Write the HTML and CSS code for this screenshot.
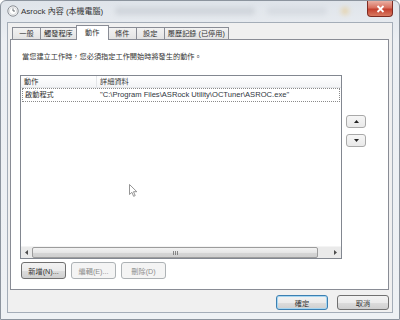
FILE: index.html
```html
<!DOCTYPE html>
<html lang="zh-Hant">
    <head>
        <meta charset="UTF-8" />
        <title>Asrock 內容 (本機電腦)</title>
        <link rel="stylesheet" href="styles.css">
    </head>
    <body>

        <div class="window">
            <div class="titlebar">
                <svg class="app-icon" width="12" height="12" viewBox="0 0 12 12">
                    <circle cx="6" cy="6" r="5.2" fill="#f4f4f4" stroke="#8a8f96" stroke-width="1"/>
                    <circle cx="6" cy="6" r="3.6" fill="#ffffff" stroke="#c4c8cc" stroke-width="0.6"/>
                    <path d="M6 3.4 V6 H8" fill="none" stroke="#5a6068" stroke-width="0.9"/>
                </svg>
                <span class="title">Asrock 內容 (本機電腦)</span>
                <span class="haze haze-wide"></span>
                <span class="haze haze-short"></span>
                <span class="haze haze-dot"></span>
                <button class="close-btn">
                    <svg width="9" height="8" viewBox="0 0 9 8">
                        <path d="M1.5 1 L7.5 7 M7.5 1 L1.5 7" stroke="#ffffff" stroke-width="1.8"/>
                    </svg>
                </button>
            </div>

            <div class="client">
                <div class="tabs">
                    <div class="tab">一般</div>
                    <div class="tab">觸發程序</div>
                    <div class="tab active">動作</div>
                    <div class="tab">條件</div>
                    <div class="tab">設定</div>
                    <div class="tab">履歷記錄 (已停用)</div>
                </div>

                <div class="panel">
                    <p class="desc">當您建立工作時，您必須指定工作開始時將發生的動作。</p>

                    <div class="list-row">
                        <div class="listview">
                            <div class="lv-header">
                                <div class="col col-action">動作</div>
                                <div class="col col-detail">詳細資料</div>
                            </div>
                            <div class="lv-item">
                                <div class="col col-action">啟動程式</div>
                                <div class="col col-detail path">"C:\Program Files\ASRock Utility\OCTuner\ASROC.exe"</div>
                            </div>
                            <div class="lv-space"></div>
                            <div class="hscroll">
                                <div class="sb-arrow">
                                    <svg width="3" height="5" viewBox="0 0 3 5"><path d="M3 0 L0 2.5 L3 5 Z" fill="#4d4d4d"/></svg>
                                </div>
                                <div class="sb-thumb">
                                    <svg width="5" height="4" viewBox="0 0 5 4"><path d="M0.5 0 V4 M2.5 0 V4 M4.5 0 V4" stroke="#6d6d6d" stroke-width="0.8"/></svg>
                                </div>
                                <div class="sb-track"></div>
                                <div class="sb-arrow">
                                    <svg width="3" height="5" viewBox="0 0 3 5"><path d="M0 0 L3 2.5 L0 5 Z" fill="#4d4d4d"/></svg>
                                </div>
                            </div>
                        </div>

                        <div class="order-btns">
                            <button class="btn small-btn">
                                <svg width="5" height="3" viewBox="0 0 5 3"><path d="M0 3 L2.5 0 L5 3 Z" fill="#222"/></svg>
                            </button>
                            <button class="btn small-btn">
                                <svg width="5" height="3" viewBox="0 0 5 3"><path d="M0 0 L2.5 3 L5 0 Z" fill="#222"/></svg>
                            </button>
                        </div>
                    </div>

                    <div class="actions">
                        <button class="btn act-btn">新增(N)...</button>
                        <button class="btn act-btn" disabled>編輯(E)...</button>
                        <button class="btn act-btn" disabled>刪除(D)</button>
                    </div>
                </div>

                <div class="footer">
                    <button class="btn dlg-btn default">確定</button>
                    <button class="btn dlg-btn">取消</button>
                </div>
            </div>

            <svg class="cursor" width="9" height="14" viewBox="0 0 9 14">
                <path d="M0.5 0.5 L0.5 10.5 L2.9 8.3 L4.6 12.3 L6.2 11.6 L4.5 7.7 L7.8 7.7 Z" fill="#ffffff" stroke="#7a7a7a" stroke-width="0.8"/>
            </svg>
        </div>

    </body>
</html>
```

FILE: styles.css
```css
* {
    box-sizing: border-box;
}

body {
    margin: 0;
    font-family: "Liberation Sans", "Noto Sans CJK TC", sans-serif;
    font-size: 7.2px;
    color: #333333;
    background-color: #ffffff;
}

.window {
    position: relative;
    width: 400px;
    height: 320px;
    border: 1px solid #8c949e;
    border-radius: 6px 6px 0 0;
    background: linear-gradient(#dfe4ea, #eceff3 40px, #eef1f4);
    display: flex;
    flex-direction: column;
}

.titlebar {
    height: 21px;
    display: flex;
    align-items: flex-start;
}

.app-icon {
    margin: 4px 0 0 6px;
}

.title {
    margin: 5px 0 0 2px;
    font-size: 8px;
    line-height: 11px;
    color: #333333;
}

.haze {
    height: 8px;
    margin-top: 6px;
    border-radius: 4px;
    background-color: #c9ced5;
    filter: blur(2.5px);
    opacity: 0.7;
}

.haze-wide {
    width: 140px;
    margin-left: 12px;
}

.haze-short {
    width: 60px;
    margin-left: 12px;
    opacity: 0.45;
}

.haze-dot {
    width: 8px;
    margin-left: 14px;
    background-color: #e8c98a;
    opacity: 0.6;
}

.close-btn {
    margin-left: auto;
    margin-right: 6px;
    width: 26px;
    height: 16px;
    padding: 0;
    border: 1px solid #7e2b22;
    border-top: none;
    border-radius: 0 0 4px 4px;
    background: linear-gradient(#eab0a3, #d8705e 45%, #c4412f 55%, #d97a62);
    display: flex;
    align-items: center;
    justify-content: center;
}

.client {
    flex: 1;
    margin: 0 6px 6px;
    border: 1px solid #a4adb8;
    background-color: #f0f0f0;
    padding: 2px 3px 2px 2px;
    display: flex;
    flex-direction: column;
}

.tabs {
    height: 14px;
    margin-left: 2px;
    display: flex;
    align-items: flex-end;
}

.tab {
    position: relative;
    height: 12px;
    min-width: 29px;
    padding: 0 3px;
    margin-left: -1px;
    border: 1px solid #898c95;
    border-bottom: none;
    background: linear-gradient(#f2f2f2, #e3e3e3);
    line-height: 11px;
    text-align: center;
    white-space: nowrap;
}

.tab:first-child {
    margin-left: 0;
}

.tab.active {
    z-index: 1;
    height: 15px;
    min-width: 33px;
    margin-bottom: -1px;
    background: #ffffff;
    line-height: 13px;
}

.panel {
    flex: 1;
    background-color: #ffffff;
    border: 1px solid #898c95;
    padding: 12px 0 0 9px;
    display: flex;
    flex-direction: column;
}

.desc {
    margin: 0 0 0 2px;
    line-height: 10px;
}

.list-row {
    margin-top: 13px;
    display: flex;
    align-items: flex-start;
}

.listview {
    width: 322px;
    height: 184px;
    border: 1px solid #828790;
    display: flex;
    flex-direction: column;
}

.lv-header {
    height: 12px;
    display: flex;
    background: linear-gradient(#ffffff, #f3f4f6);
    border-bottom: 1px solid #e3e5e8;
}

.lv-header .col-action {
    border-right: 1px solid #e3e5e8;
}

.col {
    padding-left: 3px;
    line-height: 11px;
    white-space: nowrap;
}

.col-action {
    width: 76px;
}

.lv-item {
    height: 14px;
    margin: 0 1px;
    display: flex;
    border: 1px dotted #8a8a8a;
}

.lv-item .col {
    padding-left: 2px;
    line-height: 12px;
}

.lv-item .col-action {
    width: 75px;
}

.path {
    font-size: 7.6px;
    color: #2f3640;
}

.lv-space {
    flex: 1;
}

.hscroll {
    height: 12px;
    display: flex;
    background-color: #eaeaea;
    border-top: 1px solid #f4f4f4;
}

.sb-arrow {
    width: 11px;
    display: flex;
    align-items: center;
    justify-content: center;
}

.sb-thumb {
    width: 286px;
    border: 1px solid #9c9c9c;
    border-radius: 2px;
    background: linear-gradient(#f3f3f3, #e6e6e6 50%, #d6d6d6 51%, #cfcfcf);
    display: flex;
    align-items: center;
    justify-content: center;
}

.sb-track {
    flex: 1;
}

.order-btns {
    margin: 40px 0 0 4px;
    display: flex;
    flex-direction: column;
    gap: 6px;
}

.btn {
    padding: 0;
    border: 1px solid #707070;
    border-radius: 3px;
    background: linear-gradient(#f2f2f2, #ebebeb 50%, #dddddd 51%, #cfcfcf);
    font-family: inherit;
    font-size: 7.2px;
    color: #333333;
    display: flex;
    align-items: center;
    justify-content: center;
}

.btn:disabled {
    border-color: #adb2b5;
    background: #f4f4f4;
    color: #8d8d8d;
}

.small-btn {
    width: 20px;
    height: 13px;
    border-color: #a9a9a9;
    background: linear-gradient(#f6f6f6, #e9e9e9);
}

.actions {
    margin: 3px 0 0 1px;
    display: flex;
    gap: 5px;
}

.act-btn {
    width: 45px;
    height: 17px;
}

.footer {
    padding-top: 5px;
    display: flex;
    justify-content: flex-end;
    gap: 9px;
}

.dlg-btn {
    width: 52px;
    height: 15px;
}

.dlg-btn.default {
    border-color: #3c7fb1;
    box-shadow: inset 0 0 0 1px #a6d6f2;
}

.cursor {
    position: absolute;
    left: 128px;
    top: 183px;
}
```
